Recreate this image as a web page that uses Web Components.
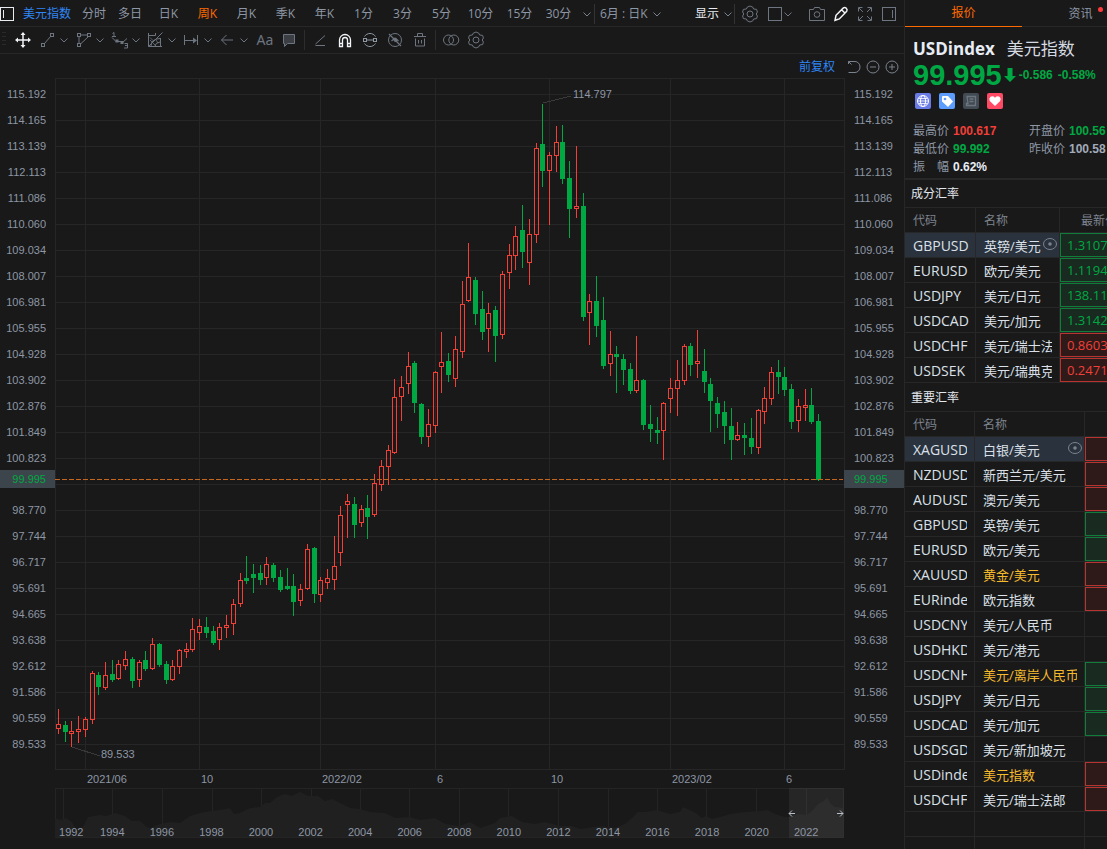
<!DOCTYPE html>
<html lang="zh-CN">
<head>
<meta charset="utf-8">
<title>美元指数 USDindex</title>
<style>
  html, body { margin: 0; height: 100%; }
  body {
    background: #191919;
    color: #8d97a5;
    font: 12px/16px "Open Sans", "Noto Sans CJK SC", sans-serif;
    overflow: hidden;
    --line: #272727;
    --up: #f23f38;
    --down: #00a843;
    --blue: #2f86f6;
    --accent: #ff6a00;
    --digits: "Liberation Sans", Arial, sans-serif;
  }
</style>
</head>
<body>
<market-app></market-app>

<script>
const BUTTON_RESET = `
  button { all: unset; box-sizing: border-box; cursor: pointer; white-space: nowrap; }
  svg { display: block; flex: none; }
`;

class View extends HTMLElement {
  constructor() {
    super();
    this.attachShadow({ mode: 'open' });
  }
  connectedCallback() {
    this.shadowRoot.innerHTML = `<style>${BUTTON_RESET}${this.styles()}</style>${this.markup()}`;
  }
  styles() { return ''; }
  markup() { return ''; }
}

/* ---------- icons ---------- */
const GEAR = '<path d="M6.2 2.2 L9 1 L11.8 2.2 L12.6 4 L15.6 4.4 L16.4 7 L15.2 9 L16.4 11 L15.6 13.6 L12.6 14 L11.8 15.8 L9 17 L6.2 15.8 L5.4 14 L2.4 13.6 L1.6 11 L2.8 9 L1.6 7 L2.4 4.4 L5.4 4Z" stroke-linejoin="round"/><circle cx="9" cy="9" r="3"/>';
const ICONS = {
  sideOpen: '<rect x="2.5" y="2.5" width="13" height="13"/><path d="M5.5 5v8"/>',
  gear: GEAR,
  square: '<rect x="2.5" y="2.5" width="13" height="13"/>',
  camera: '<path d="M1.5 4.5h4l1-2h5l1 2h4v11h-15z"/><circle cx="9" cy="9.5" r="2.8"/>',
  pen: '<path d="M3 15.3l1-5 7.4-7.4q1.5-1 2.9.4t.4 2.9L7.3 13.9zM9.6 4.8l3.5 3.5" stroke-width="1.5"/>',
  expand: '<path d="M2.5 6.500v-4h4M11.5 2.5h4v4M15.5 11.500v4h-4M6.500 15.500h-4v-4M3 3l4 4M15 3l-4 4M3 15l4-4M15 15l-4-4"/>',
  sideRight: '<rect x="2.5" y="2.5" width="13" height="13"/><path d="M12.5 5v8"/>',
  move: '<path d="M9 2v14M2 9h14" stroke-width="1.5"/><path d="M9 1l2.5 3h-5zM9 17l2.5-3h-5zM1 9l3-2.5v5zM17 9l-3-2.5v5z" fill="currentColor" stroke="none"/>',
  line: '<rect x="3.5" y="12.5" width="3" height="3"/><rect x="12.5" y="2.5" width="3" height="3"/><path d="M6.5 12.5l6-7"/>',
  poly: '<rect x="3.5" y="2.5" width="3" height="3"/><rect x="13.500" y="2.5" width="3" height="3"/><rect x="3.500" y="12.5" width="3" height="3"/><path d="M6.500 4h7M5 5.500v7M6.500 13l8-7.500"/>',
  wave: '<path d="M2.500 2.500l1.500-1v4M2 5.500h4M14.500 12.500h3v4.500h-3.500M15 14.500h2.500"/><path d="M2 6.500l4.500 4.500M8 10.500h3M12.500 11.500L17 7.500"/><rect x="6" y="9" width="2" height="2" fill="currentColor"/><rect x="11" y="10.500" width="2" height="2" fill="currentColor"/>',
  fan: '<path d="M2.500 2v13.500H16M2.500 4.500h7M2.500 15.500L16.500 1.500M14.500 7v8.500" /><path d="M9.500 2v2.500M5 15q0-7 9-7.500M9 15q0-3 5-4" /><path d="M4 6.500l3 3M4 9l2 2M7 12l3 3M10 9l2 3" stroke-width=".8"/>',
  range: '<path d="M2.500 4v10M15.500 4v10M3 9.500h9"/><path d="M11 6.500l4 3-4 3z" fill="currentColor" stroke="none"/>',
  arrow: '<path d="M15 9H3.500M8.500 4l-5 5 5 5"/>',
  note: '<path d="M3.500 3.500h11v9h-7l-3 3v-3h-1z" fill="#3b3e43"/>',
  angle: '<path d="M14 4.500l-9.500 8.500M4.500 14.500H14"/>',
  magnet: '<path d="M3.500 15.500V9a5.500 5.500 0 0 1 11 0v6.500h-3V9a2.500 2.500 0 0 0-5 0v6.500zM3.500 12.500h3M11.500 12.500h3" stroke-width="1.300"/>',
  linked: '<path d="M3.500 5.500a6.500 6.500 0 0 1 11 0M3.500 12.500a6.500 6.500 0 0 0 11 0M5.500 9h7"/><rect x="2.500" y="7.500" width="3" height="3"/><rect x="12.500" y="7.500" width="3" height="3"/>',
  hidden: '<circle cx="9" cy="9" r="6.500"/><path d="M3 3l12 12M5.500 10l3.500-3 3.500 3" stroke-width="1.200"/><circle cx="9.500" cy="9" r="1.500" fill="currentColor"/>',
  trash: '<path d="M3 5.500h12M6.500 5.500v-3h5v3M4.500 7.500v7.500h9V7.500M7.500 9v3.500M10.500 9v3.500"/>',
  overlap: '<circle cx="6.500" cy="9" r="5"/><circle cx="11.800" cy="9" r="5"/>',
  undo: '<path d="M3.500 3.500l3 3M3.500 6V3.500H10a5 5.500 0 0 1 0 11H3.500"/>',
  minus: '<circle cx="9" cy="9" r="6"/><path d="M6 9h6"/>',
  plus: '<circle cx="9" cy="9" r="6"/><path d="M6 9h6M9 6v6"/>',
  focus: '<ellipse cx="9" cy="9" rx="6.500" ry="5.500"/><circle cx="9" cy="9" r="1.800" fill="currentColor" stroke="none"/>',
};
const icon = (name) =>
  `<svg class="ico" width="18" height="18" viewBox="0 0 18 18" fill="none" stroke="currentColor" aria-hidden="true">${ICONS[name]}</svg>`;
const CHEVRON = '<svg width="8" height="8" viewBox="0 0 8 8" fill="none" stroke="currentColor" aria-hidden="true"><path d="M.5 2.500L4 6l3.500-3.500"/></svg>';

/* ---------- period bar ---------- */
class PeriodBar extends View {
  styles() { return `
    :host { display: flex; align-items: center; box-sizing: border-box; height: 27px; padding-top: 1px; border-bottom: 1px solid var(--line); color: #8d97a5; }
    .box { color: #e8ebf0; margin-left: -2px; }
    .symbol { color: var(--blue); padding-left: 7px; width: 60px; }
    .wide { width: 36px; text-align: center; }
    .k { width: 39px; text-align: center; }
    .wide + .k { margin-left: 1px; }
    .on { color: var(--accent); }
    .more { width: 16px; padding-left: 5px; }
    .drop { display: flex; align-items: center; gap: 5px; }
    .range { margin-left: 5px; }
    .sep { width: 1px; height: 20px; background: #333; }
    .right { display: flex; align-items: center; gap: 6px; margin-left: auto; padding-right: 6px; color: #6d7580; }
    .show { color: #e8ebf0; gap: 5px; margin-right: -4px; }
    .show svg, .more svg, .range svg { color: #7a828d; }
    .frame { gap: 0; margin: 0 10px 0 1px; }
    .draw { color: #f2f4f7; }
  `; }
  markup() {
    const periods = ['日K', '周K', '月K', '季K', '年K', '1分', '3分', '5分', '10分', '15分', '30分'];
    return `
      <button class="box" aria-label="侧栏">${icon('sideOpen')}</button>
      <button class="symbol">美元指数</button>
      <button class="wide">分时</button><button class="wide">多日</button>
      ${periods.map(p => `<button class="k ${p === '周K' ? 'on' : ''}">${p}</button>`).join('')}
      <button class="more" aria-label="更多周期">${CHEVRON}</button>
      <span class="sep"></span>
      <button class="drop range">6月 : 日K ${CHEVRON}</button>
      <div class="right">
        <button class="drop show">显示${CHEVRON}</button>
        <span class="sep"></span>
        <button aria-label="设置">${icon('gear')}</button>
        <button class="drop frame" aria-label="布局">${icon('square')}${CHEVRON}</button>
        <button aria-label="截图">${icon('camera')}</button>
        <button class="draw" aria-label="画线">${icon('pen')}</button>
        <button aria-label="全屏">${icon('expand')}</button>
        <button aria-label="右侧栏">${icon('sideRight')}</button>
      </div>`;
  }
}
customElements.define('period-bar', PeriodBar);

/* ---------- drawing tools ---------- */
class DrawBar extends View {
  styles() { return `
    :host { display: flex; align-items: center; height: 26px; border-bottom: 1px solid var(--line); color: #6d7580; }
    .grip { width: 4px; height: 16px; margin: 0 8px 0 2px; background: repeating-linear-gradient(#2a2a2a 0 1px, transparent 1px 4px); }
    .t { width: 25px; height: 24px; display: flex; align-items: center; justify-content: center; }
    .d { width: 36px; height: 24px; display: flex; align-items: center; gap: 4px; }
    .bright { color: #f2f4f7; }
    .move { width: 24px; justify-content: flex-start; }
    .aa { width: 22px; font: 14px/16px "Noto Sans", sans-serif; }
    .sep { width: 1px; height: 20px; margin: 0 2px 0 3px; background: #2d2d2d; }
    .mid { color: #8d97a5; }
  `; }
  markup() {
    const drop = [['line', '线段'], ['poly', '形状'], ['wave', '波浪'], ['fan', '江恩'], ['range', '区间'], ['arrow', '箭头']];
    const tool = (n, label, cls = '') => `<button class="t ${cls}" aria-label="${label}">${icon(n)}</button>`;
    return `
      <span class="grip"></span>
      ${tool('move', '移动', 'bright move')}
      ${drop.map(([n, l]) => `<button class="d" aria-label="${l}">${icon(n)}${CHEVRON}</button>`).join('')}
      <button class="t aa">Aa</button>
      ${tool('note', '批注')}
      <span class="sep"></span>
      ${tool('angle', '角度')}${tool('magnet', '磁吸', 'bright')}${tool('linked', '联动', 'mid')}${tool('hidden', '隐藏')}${tool('trash', '删除')}
      <span class="sep"></span>
      ${tool('overlap', '叠加')}${tool('gear', '设置')}`;
  }
}
customElements.define('draw-bar', DrawBar);

/* ---------- price scale ---------- */
const LEVELS = ['115.192','114.165','113.139','112.113','111.086','110.060','109.034','108.007','106.981','105.955','104.928','103.902','102.876','101.849','100.823','','98.770','97.744','96.717','95.691','94.665','93.638','92.612','91.586','90.559','89.533'];
class PriceScale extends View {
  styles() { return `
    :host { display: block; position: relative; padding-top: 3px; font: 11px/26px var(--digits); text-align: right; color: #8d97a5; }
    :host([side="right"]) { text-align: left; }
    div { height: 26px; padding: 0 9px 0 0; }
    :host([side="right"]) div { padding: 0 0 0 10px; }
    div.now { position: absolute; left: 0; right: 0; top: 392px; height: 18px; line-height: 18px; background: #3d454c; color: var(--down); }
  `; }
  markup() { return LEVELS.map(l => `<div>${l}</div>`).join('') + '<div class="now">99.995</div>'; }
}
customElements.define('price-scale', PriceScale);

/* ---------- candles: x, high, body top, body bottom, low, rising (1) or falling (0) ---------- */
const CANDLES = `58 709 724 729 734 1|65 721 725 732 742 0|71 721 731 734 747 1|78 716 729 732 743 1|85 717 719 730 737 1|92 671 673 720 724 1|98 672 675 687 695 0|105 662 675 688 690 1|112 660 674 680 682 0|118 660 664 679 680 1|125 651 659 666 670 1|132 657 659 681 688 0|139 660 662 680 687 1|145 651 660 669 671 0|152 638 644 669 670 1|159 643 644 665 667 0|166 661 664 680 684 0|172 660 666 680 681 1|179 649 650 667 674 1|186 643 649 652 658 1|192 618 629 650 652 1|199 619 626 633 640 1|206 617 627 633 638 0|213 626 631 643 645 0|219 623 627 640 650 1|226 615 625 628 638 1|233 599 604 624 635 1|240 573 580 604 607 1|246 556 578 581 584 0|253 564 574 578 593 0|260 565 573 580 585 0|266 557 564 578 585 1|273 563 565 578 582 0|280 570 577 590 592 0|287 568 586 589 590 0|293 574 586 602 616 0|300 584 589 601 606 1|307 544 549 589 590 1|314 547 548 594 603 0|320 577 580 595 602 1|327 569 578 583 589 1|334 536 566 580 590 1|340 506 515 553 566 1|347 494 501 505 538 1|354 497 504 525 538 0|361 505 509 523 527 1|367 495 508 517 539 0|374 474 483 515 517 1|381 460 466 485 491 1|388 445 450 467 485 1|394 379 397 453 454 1|401 376 387 397 421 1|408 352 366 384 394 1|414 361 363 403 413 0|421 403 404 437 444 0|428 409 424 437 447 1|435 371 372 426 433 1|441 332 362 367 393 1|448 353 361 375 382 0|455 336 349 379 387 1|462 281 304 352 358 1|468 243 277 301 302 1|475 277 280 314 325 0|482 291 309 332 340 0|488 303 313 329 352 1|495 306 310 336 362 0|502 271 274 335 339 1|509 244 255 273 289 1|515 226 236 256 270 1|522 205 230 252 268 0|529 219 234 263 285 1|536 143 148 235 243 1|542 104 144 171 187 0|549 152 155 171 225 1|556 126 142 156 172 1|562 125 142 179 184 0|569 161 178 209 238 0|576 146 206 209 218 1|583 193 206 317 321 0|589 294 301 313 345 1|596 276 301 326 337 0|603 297 320 366 369 0|610 331 354 364 376 1|616 346 354 357 393 0|623 354 359 370 385 0|630 363 369 391 394 0|636 336 380 391 393 1|643 379 380 425 430 0|650 405 424 429 442 0|657 417 430 433 444 0|663 402 403 431 460 1|670 378 388 399 413 1|677 360 380 389 416 1|684 344 346 381 385 1|690 343 346 365 376 0|697 330 361 364 378 1|704 349 371 382 393 0|710 378 384 401 432 0|717 397 403 414 428 0|724 401 412 426 444 0|731 408 426 440 460 0|737 422 435 440 441 1|744 423 435 438 455 0|751 418 438 447 454 0|758 409 410 448 454 1|764 387 398 412 424 1|771 367 372 399 405 1|778 360 372 377 394 0|784 367 377 390 396 0|791 384 389 422 429 0|798 399 406 421 432 1|805 389 405 408 421 1|811 388 405 422 424 0|818 414 421 480 481 0`;

class CandlePlot extends View {
  styles() { return `
    :host { display: block; position: relative; min-width: 0; }
    svg { width: 100%; height: 692px; }
    .tip { position: absolute; font: 11px/14px var(--digits); color: #8d97a5; }
    .high { left: calc(100% * 518 / 790); top: 9px; }
    .low { left: calc(100% * 46 / 790); top: 669px; }
  `; }
  markup() {
    const L = 55, T = 78;
    let up = '', down = '';
    for (const row of CANDLES.split('|')) {
      const [x, h, t, b, l, rise] = row.split(' ').map(Number);
      const cx = x - L;
      if (rise) {
        up += `M${cx + .5} ${h - T}V${t - T}M${cx + .5} ${b - T}V${l - T}M${cx - 1.5} ${t - T + .5}h4V${b - T - .5}h-4z`;
      } else {
        down += `M${cx} ${h - T}h1V${t - T}h2V${b - T}h-2V${l - T}h-1V${b - T}h-2V${t - T}h2z`;
      }
    }
    let grid = 'M.5 .5H789.5V691.5H.5z';
    for (let i = 0; i < 26; i++) grid += `M0 ${16.5 + 26 * i}H789`;
    for (const x of [85, 199, 320, 435, 549, 670, 784]) grid += `M${x - L + .5} 0V691`;
    return `
      <svg viewBox="0 0 790 692" preserveAspectRatio="none" fill="none" shape-rendering="crispEdges" role="img" aria-label="周K线">
        <path d="${grid}" stroke="#262626"/>
        <path d="M488 25l28-7M17 669l28 9" stroke="#3a3a3a"/>
        <path d="${up}" stroke="#f23f38"/>
        <path d="${down}" fill="#00a843"/>
        <path d="M0 401.5H788" stroke="#c4661d" stroke-dasharray="5 2"/>
      </svg>
      <span class="tip high">114.797</span><span class="tip low">89.533</span>`;
  }
}
customElements.define('candle-plot', CandlePlot);

/* ---------- date axis and history navigator ---------- */
class DateAxis extends View {
  styles() { return `
    :host { display: grid; grid-template-columns: 32fr 114fr 121fr 115fr 114fr 121fr 114fr 59fr; height: 18px; font: 11px/18px var(--digits); color: #8d97a5; }
    span { min-width: 0; }
  `; }
  markup() { return ['', '2021/06', '10', '2022/02', '6', '10', '2023/02', '6'].map(t => `<span>${t}</span>`).join(''); }
}
customElements.define('date-axis', DateAxis);

class HistoryStrip extends View {
  styles() { return `
    :host { display: grid; min-width: 0; }
    svg, .years { grid-area: 1 / 1; }
    svg { width: 100%; height: 50px; }
    .years { display: grid; grid-template-columns: 65fr repeat(15, 99fr) 28fr; align-items: end; text-align: center; font: 11px/12px var(--digits); color: #8d97a5; }
    span { min-width: 0; }
  `; }
  markup() {
    const pts = '55 818,60 820,66 818,72 822,76 829,83 827,88 817,94 816,100 815,106 816,115 813,125 816,132 821,140 821,147 827,150 828,160 824,170 822,180 823,190 816,200 813,210 811,220 810,230 808,234 814,240 813,250 808,260 807,265 803,270 803,277 797,285 794,292 796,300 792,308 796,318 796,325 801,332 799,340 803,350 808,360 809,370 812,385 813,395 818,410 817,420 820,435 818,445 824,460 826,470 822,480 828,495 823,500 818,512 816,522 822,535 824,545 822,560 826,572 826,580 829,600 826,615 828,625 824,632 818,638 812,645 812,657 810,670 814,680 812,683 807,692 811,697 814,702 818,706 816,712 819,720 817,730 814,745 812,760 811,768 810,775 814,785 817,790 817,798 814,806 815,812 811,818 804,824 801,827 797,831 804,835 807,843 808'
      .split(',').map(p => { const [x, y] = p.split(' '); return `${x - 55} ${y - 788}`; }).join('L');
    let ticks = '';
    for (const x of [63, 112, 162, 212, 261, 311, 360, 409, 459, 508, 558, 608, 657, 706, 756, 806]) ticks += `M${x - 54.5} 0V49`;
    const years = Array.from({ length: 16 }, (_, i) => `<span>${1992 + i * 2}</span>`).join('');
    return `
      <svg viewBox="0 0 790 50" preserveAspectRatio="none" fill="none" role="img" aria-label="历史走势">
        <path d="M.5 .5H788.5V49.5H.5z${ticks}" stroke="#242424"/>
        <path d="M${pts}V49H0z" fill="#202020"/>
        <rect x="734" width="55" height="50" fill="#fff" fill-opacity=".06"/>
        <path d="M734 25.500h6M737 22.500l-3 3 3 3M782 25.500h6M785 22.500l3 3-3 3" stroke="#b8bec8"/>
      </svg>
      <div class="years">${years}</div>`;
  }
}
customElements.define('history-strip', HistoryStrip);

class PriceChart extends View {
  styles() { return `
    :host { display: block; }
    .head { display: flex; align-items: center; justify-content: flex-end; box-sizing: border-box; height: 24px; padding: 2px 3px 0 0; color: #7a828d; }
    .adjust { color: var(--blue); margin-right: 10px; }
    .head button + button + button { margin-left: 1px; }
    .body { display: grid; grid-template-columns: 55px minmax(0, 1fr) 59px; }
    date-axis, history-strip { grid-column: 2; }
    price-scale[side="right"] { margin-left: -1px; }
  `; }
  markup() { return `
    <div class="head">
      <button class="adjust">前复权</button>
      <button aria-label="还原">${icon('undo')}</button>
      <button aria-label="缩小">${icon('minus')}</button>
      <button aria-label="放大">${icon('plus')}</button>
    </div>
    <div class="body">
      <price-scale></price-scale><candle-plot></candle-plot><price-scale side="right"></price-scale>
      <date-axis></date-axis><history-strip></history-strip>
    </div>`; }
}
customElements.define('price-chart', PriceChart);

/* ---------- quote summary ---------- */
class QuoteCard extends View {
  styles() { return `
    :host { display: block; height: 150px; border-bottom: 2px solid var(--line); overflow: hidden; padding: 1px 0 0 8px; white-space: nowrap; }
    h1 { margin: 0; display: flex; gap: 12px; margin-top: 9px; font: bold 17px/24px "Open Sans", "Noto Sans CJK SC", sans-serif; color: #e8edf5; }
    h1 span { font-weight: 400; color: #d5dae2; }
    .price { display: flex; align-items: center; height: 27px; color: var(--down); font: bold 12px/28px var(--digits); }
    .price b { font-size: 29px; margin-right: 2px; }
    .price i { font-style: normal; margin-right: 5px; }
    .price svg { margin-right: 3px; }
    .badges { display: flex; gap: 8px; margin: 5px 0 13px 2px; }
    dl { margin: 0; display: grid; grid-template-columns: 116px 116px; line-height: 18px; }
    dl div { display: flex; gap: 4px; }
    dt { width: 36px; text-align-last: justify; }
    dd { margin: 0; font: bold 12px/18px var(--digits); }
    .up { color: var(--up); } .down { color: var(--down); } .hi { color: #e8edf5; } .flat { color: #a3abb8; }
  `; }
  markup() { return `
    <h1>USDindex<span>美元指数</span></h1>
    <div class="price"><b>99.995</b>
      <svg width="12" height="16" viewBox="0 0 12 16" fill="currentColor" aria-hidden="true"><path d="M3.500 1h5v8H12l-6 6-6-6h3.500z"/></svg>
      <i>-0.586</i><i>-0.58%</i></div>
    <div class="badges">
      <svg width="16" height="16" viewBox="0 0 16 16" fill="none" stroke="#fff"><rect width="16" height="16" rx="2" fill="#6b7be6" stroke="none"/><circle cx="8" cy="8" r="5.500"/><ellipse cx="8" cy="8" rx="2.500" ry="5.500"/><path d="M2.500 8h11M3.500 5.500h9M3.500 10.500h9" stroke-width=".8"/></svg>
      <svg width="16" height="16" viewBox="0 0 16 16"><rect width="16" height="16" rx="2" fill="#5c9dff"/><path d="M3 4q0-1 1-1h5l5 5.500L9 14 3 8.500z" fill="#fff"/><circle cx="6" cy="6" r="1.300" fill="#5c9dff"/></svg>
      <svg width="16" height="16" viewBox="0 0 16 16"><rect width="16" height="16" rx="2" fill="#424a54"/><path d="M4 3.500h8.500v9H3.500v-2H5zM6.500 6h4M6.500 8.500h4" fill="none" stroke="#6c747e" stroke-width="1.300"/></svg>
      <svg width="16" height="16" viewBox="0 0 16 16"><rect width="16" height="16" rx="2" fill="#ff4a66"/><path d="M8 13L2.800 8Q1.500 5.500 3.500 3.800 6 2.500 8 4.800 10 2.500 12.500 3.800 14.500 5.500 13.200 8z" fill="#fff"/></svg>
    </div>
    <dl>
      <div><dt>最高价</dt><dd class="up">100.617</dd></div><div><dt>开盘价</dt><dd class="down">100.56</dd></div>
      <div><dt>最低价</dt><dd class="down">99.992</dd></div><div><dt>昨收价</dt><dd class="flat">100.58</dd></div>
      <div><dt>振 幅</dt><dd class="hi">0.62%</dd></div>
    </dl>`; }
}
customElements.define('quote-card', QuoteCard);

/* ---------- rate tables ---------- */
const RATES = {
  parts: {
    title: '成分汇率', widths: [71, 84], last: '最新价',
    rows: [['GBPUSD','英镑/美元','d','1.3107'],['EURUSD','欧元/美元','d','1.1194'],['USDJPY','美元/日元','d','138.11'],['USDCAD','美元/加元','d','1.3142'],['USDCHF','美元/瑞士法郎','u','0.8603'],['USDSEK','美元/瑞典克朗','u','0.2471']],
  },
  major: {
    title: '重要汇率', widths: [70, 110], last: '',
    rows: [['XAGUSD','白银/美元','u'],['NZDUSD','新西兰元/美元','u'],['AUDUSD','澳元/美元','u'],['GBPUSD','英镑/美元','d'],['EURUSD','欧元/美元','d'],['XAUUSD','黄金/美元','u','',1],['EURindex','欧元指数','u'],['USDCNY','美元/人民币',''],['USDHKD','美元/港元',''],['USDCNH','美元/离岸人民币','d','',1],['USDJPY','美元/日元','d'],['USDCAD','美元/加元','d'],['USDSGD','美元/新加坡元',''],['USDindex','美元指数','u','',1],['USDCHF','美元/瑞士法郎','u'],['','',''],['','','']],
  },
};
class RateTable extends View {
  styles() { return `
    :host { display: block; }
    h2 { margin: 0; padding-left: 6px; height: 27px; font-size: 12px; font-weight: 400; line-height: 28px; color: #e4e8ee; border-bottom: 1px solid var(--line); }
    :host([set="major"]) h2 { height: 28px; line-height: 30px; }
    table { border-collapse: separate; border-spacing: 0; table-layout: fixed; width: 280px; }
    th, td { box-sizing: border-box; height: 25px; padding: 0; text-align: left; font-weight: 400; border-bottom: 1px solid var(--line); border-right: 1px solid var(--line); }
    th { font-size: 12px; line-height: 22px; padding: 2px 0 0 8px; color: #7d848f; }
    th:last-child { padding-left: 21px; }
    td { color: #dbe0e8; font-size: 13px; line-height: 26px; position: relative; }
    td div { margin: 0 7px 0 8px; height: 24px; overflow: hidden; white-space: nowrap; }
    .code div { font-size: 14px; margin-right: 7px; }
    :host([set="parts"]) .code div { margin-right: 4px; }
    .gold { color: #f5b92e; }
    .sel td:not(.last) { background: #2a323e; }
    .sel .ico { position: absolute; right: 0; top: 2px; color: #7a828d; }
    td.last { border-right: 0; }
    .last div { box-sizing: border-box; margin: 0; padding-left: 6px; line-height: 22px; border: 1px solid; }
    .last .u { border-color: #b93430; background: #2d1a19; color: var(--up); }
    .last .d { border-color: #117d3b; background: #192a20; color: var(--down); }
  `; }
  markup() {
    const { title, widths, last, rows } = RATES[this.getAttribute('set')];
    return `<h2>${title}</h2>
      <table aria-label="${title}">
        <colgroup>${widths.map(w => `<col style="width:${w}px">`).join('')}<col></colgroup>
        <thead><tr><th>代码</th><th>名称</th><th>${last}</th></tr></thead>
        <tbody>${rows.map(([code, name, dir, price = '', gold], i) => `
          <tr class="${i ? '' : 'sel'}">
            <td class="code"><div>${code}</div></td>
            <td class="${gold ? 'gold' : ''}"><div>${name}</div>${i ? '' : icon('focus')}</td>
            <td class="last">${dir ? `<div class="${dir}">${price}</div>` : ''}</td>
          </tr>`).join('')}
        </tbody>
      </table>`;
  }
}
customElements.define('rate-table', RateTable);

class SidePanel extends View {
  styles() { return `
    :host { display: block; border-left: 1px solid var(--line); overflow: hidden; min-width: 0; }
    nav { display: flex; height: 27px; box-shadow: inset 0 -1px var(--line); }
    nav button { flex: none; width: 117px; height: 27px; line-height: 26px; text-align: center; position: relative; }
    nav .on { color: var(--accent); border-bottom: 1px solid var(--accent); }
    .dot { position: absolute; left: 76px; top: 7px; width: 5px; height: 5px; border-radius: 50%; background: #ff3b3b; }
  `; }
  markup() { return `
    <nav><button class="on">报价</button><button>资讯<span class="dot"></span></button></nav>
    <quote-card></quote-card>
    <rate-table set="parts"></rate-table>
    <rate-table set="major"></rate-table>`; }
}
customElements.define('side-panel', SidePanel);

class MarketApp extends View {
  styles() { return `
    :host { display: grid; grid-template-columns: minmax(0, 1fr) 203px; height: 100vh; overflow: hidden; }
  `; }
  markup() { return `
    <main><period-bar></period-bar><draw-bar></draw-bar><price-chart></price-chart></main>
    <side-panel></side-panel>`; }
}
customElements.define('market-app', MarketApp);
</script>
</body>
</html>
